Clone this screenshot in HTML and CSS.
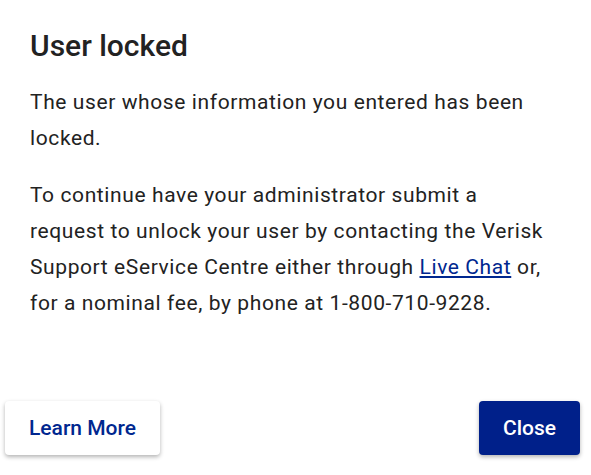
FILE: index.html
```html
<!DOCTYPE html>
<html lang="en">
<head>
<meta charset="utf-8">
<link rel="stylesheet" href="styles.css">
</head>
<body>
<div class="dialog">
  <div class="content">
    <h1 class="title">User locked</h1>
    <p class="text">The user whose information you entered has been locked.</p>
    <p class="text">To continue have your administrator submit a request to unlock your user by contacting the Verisk Support eService Centre either through <a class="link" href="#">Live Chat</a> or, for a nominal fee, by phone at 1-800-710-9228.</p>
  </div>
  <div class="actions">
    <button class="btn btn-secondary">Learn More</button>
    <button class="btn btn-primary">Close</button>
  </div>
</div>
</body>
</html>
```
FILE: styles.css
```css
html, body {
  margin: 0;
  padding: 0;
  background: #ffffff;
}
body {
  font-family: Roboto, "Liberation Sans", sans-serif;
  color: #222222;
}
.dialog {
  width: 591px;
  height: 475px;
  box-sizing: border-box;
  display: flex;
  flex-direction: column;
  justify-content: space-between;
  padding: 0 11px 20px 5px;
}
.content {
  padding: 28px 0 0 25px;
  width: 520px;
}
.title {
  margin: 0 0 20px;
  font-size: 30px;
  font-weight: 500;
  line-height: 36px;
  color: #222222;
}
.text {
  margin: 0 0 21px;
  font-size: 21px;
  line-height: 36px;
  letter-spacing: 0.6px;
}
.link {
  color: #00278f;
  text-decoration: underline;
}
.actions {
  display: flex;
  justify-content: space-between;
  align-items: center;
}
.btn {
  font-family: Roboto, "Liberation Sans", sans-serif;
  font-size: 21px;
  font-weight: 500;
  height: 54px;
  border: none;
  border-radius: 4px;
  padding: 0 24px;
  box-shadow: 0 2px 4px rgba(0, 0, 0, 0.3);
  cursor: pointer;
}
.btn-secondary {
  background: #ffffff;
  color: #00278f;
}
.btn-primary {
  background: #00208a;
  color: #ffffff;
}
```
